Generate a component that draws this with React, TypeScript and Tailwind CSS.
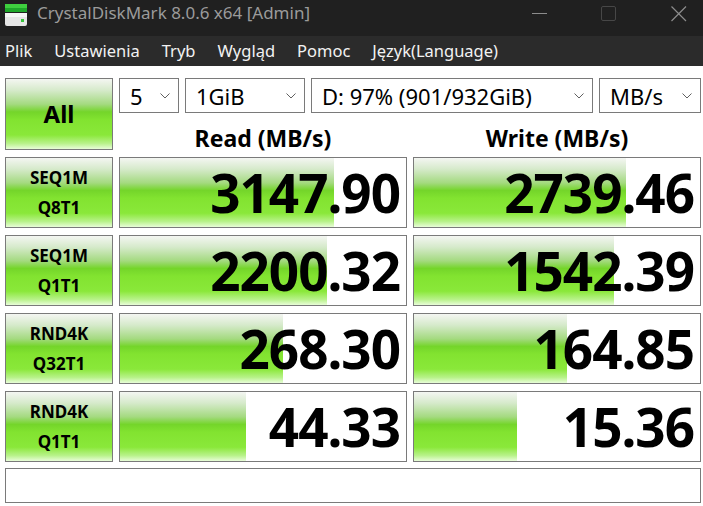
import React from 'react';

const green =
  'bg-[linear-gradient(to_bottom,#f4f6f2_0%,#d6eacb_16%,#a4da80_36%,#74d52a_47%,#82e330_58%,#8ae83a_80%,#b8f28a_92%,#e8fdd8_100%)]';

const rows = [
  { l1: 'SEQ1M', l2: 'Q8T1', read: '3147.90', readW: 214, write: '2739.46', writeW: 212 },
  { l1: 'SEQ1M', l2: 'Q1T1', read: '2200.32', readW: 207, write: '1542.39', writeW: 200 },
  { l1: 'RND4K', l2: 'Q32T1', read: '268.30', readW: 163, write: '164.85', writeW: 153 },
  { l1: 'RND4K', l2: 'Q1T1', read: '44.33', readW: 126, write: '15.36', writeW: 103 },
];

function Chevron() {
  return (
    <svg width="10" height="6" viewBox="0 0 10 6" className="shrink-0">
      <path d="M0.5 0.5 L5 5 L9.5 0.5" fill="none" stroke="#606060" strokeWidth="1" />
    </svg>
  );
}

function Select({ value, width }: { value: string; width: string }) {
  return (
    <div className={`${width} shrink-0 h-[35px] flex items-center justify-between border border-[#7a7a7a] bg-white pl-[10px] pr-[8px]`}>
      <span className="text-[22px] leading-none text-black">{value}</span>
      <Chevron />
    </div>
  );
}

function Score({ value, barWidth }: { value: string; barWidth: number }) {
  return (
    <div className="relative shrink-0 w-[288px] h-[71px] border border-[#7a7a7a] bg-white">
      <div className={`absolute left-0 top-0 bottom-0 ${green}`} style={{ width: barWidth }} />
      <div className="relative h-full flex items-center justify-end pr-[6px]">
        <span className="text-[53px] leading-none font-bold tracking-[-1px] text-black">{value}</span>
      </div>
    </div>
  );
}

function AppIcon() {
  return (
    <svg width="26" height="24" viewBox="0 0 26 24">
      <rect x="2" y="2" width="22" height="4" fill="#3fcf3f" />
      <rect x="2" y="6" width="22" height="4" fill="#1fa82a" />
      <rect x="2" y="11" width="22" height="13" rx="2" fill="#e6e6e6" />
      <rect x="2" y="11" width="22" height="4" fill="#f6f6f6" />
      <rect x="18" y="17" width="3" height="3" fill="#35c43a" />
    </svg>
  );
}

export default function App() {
  const menu = ['Plik', 'Ustawienia', 'Tryb', 'Wygląd', 'Pomoc', 'Język(Language)'];
  return (
    <div className="w-[703px] h-[506px] bg-white overflow-hidden font-['Noto_Sans',sans-serif]">
      {/* title bar */}
      <div className="h-[36px] bg-[#202020] flex items-start pt-[1px]">
        <div className="pl-[3px] pt-[1px]">
          <AppIcon />
        </div>
        <span className="ml-[8px] text-[17px] leading-[24px] text-[#9b9b9b]">CrystalDiskMark 8.0.6 x64 [Admin]</span>
        <div className="ml-auto flex items-center h-[26px]">
          <svg width="16" height="16" viewBox="0 0 16 16" className="mr-[53px]">
            <path d="M0 7.5 H15" stroke="#8c8c8c" strokeWidth="1" />
          </svg>
          <svg width="16" height="16" viewBox="0 0 16 16" className="mr-[54px]">
            <rect x="0.5" y="0.5" width="14" height="14" rx="1.5" fill="none" stroke="#474747" strokeWidth="1" />
          </svg>
          <svg width="16" height="16" viewBox="0 0 16 16" className="mr-[16px]">
            <path d="M0.5 0.5 L15 15 M15 0.5 L0.5 15" stroke="#8c8c8c" strokeWidth="1.2" />
          </svg>
        </div>
      </div>

      {/* menu bar */}
      <div className="h-[30px] bg-[#2b2b2b] flex items-center gap-[22px] pl-[5px]">
        {menu.map((m) => (
          <span key={m} className="text-[16.5px] leading-none text-[#f2f2f2]">{m}</span>
        ))}
      </div>

      {/* body */}
      <div className="pl-[5px] pt-[12px] flex flex-col">
        <div className="flex gap-[6px]">
          <div className={`w-[108px] shrink-0 h-[72px] border border-[#7a7a7a] flex items-center justify-center ${green}`}>
            <span className="text-[24px] font-bold leading-none text-black">All</span>
          </div>
          <div className="flex flex-col">
            <div className="flex gap-[6px]">
              <Select value="5" width="w-[60px]" />
              <Select value="1GiB" width="w-[120px]" />
              <Select value="D: 97% (901/932GiB)" width="w-[282px]" />
              <Select value="MB/s" width="w-[102px]" />
            </div>
            <div className="flex gap-[6px] h-[37px] pt-[12px]">
              <div className="w-[288px] shrink-0 text-center text-[23px] leading-[26px] font-bold text-black">Read (MB/s)</div>
              <div className="w-[288px] shrink-0 text-center text-[23px] leading-[26px] font-bold text-black">Write (MB/s)</div>
            </div>
          </div>
        </div>

        <div className="mt-[7px] flex flex-col gap-[7px]">
          {rows.map((r, i) => (
            <div key={i} className="flex gap-[6px]">
              <div className={`w-[108px] shrink-0 h-[71px] border border-[#7a7a7a] flex flex-col items-center justify-center ${green}`}>
                <span className="text-[17px] font-bold leading-[30px] text-black">{r.l1}</span>
                <span className="text-[17px] font-bold leading-[30px] text-black">{r.l2}</span>
              </div>
              <Score value={r.read} barWidth={r.readW} />
              <Score value={r.write} barWidth={r.writeW} />
            </div>
          ))}
        </div>

        <div className="mt-[6px] w-[696px] h-[35px] border border-[#7a7a7a] bg-white" />
      </div>
    </div>
  );
}
